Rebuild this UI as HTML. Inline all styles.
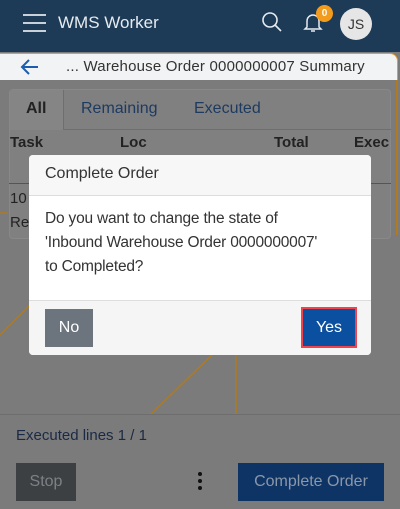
<!DOCTYPE html>
<html><head><meta charset="utf-8"><style>
*{box-sizing:border-box;margin:0;padding:0}
body{width:400px;height:509px;overflow:hidden;position:relative;background:#7b7b7b;font-family:"Liberation Sans",sans-serif}
.a{position:absolute}
</style></head><body>
<div class="a" style="left:0;top:0;width:400px;height:52px;background:#1d3a56"></div>
<div class="a" style="top:14px;left:23px;width:23px;height:2px;background:#c9d0d8"></div>
<div class="a" style="top:22px;left:23px;width:23px;height:2px;background:#c9d0d8"></div>
<div class="a" style="top:30px;left:23px;width:23px;height:2px;background:#c9d0d8"></div>
<div class="a" style="left:58px;top:13px;font-size:17px;color:#e6ebf0">WMS Worker</div>
<svg class="a" style="left:260px;top:10px" width="24" height="24" viewBox="0 0 24 24" fill="none" stroke="#e6ebf0" stroke-width="1.6"><circle cx="10" cy="10" r="7"/><path d="M15 15l6 6"/></svg>
<svg class="a" style="left:301px;top:10px" width="24" height="24" viewBox="0 0 24 24" fill="none" stroke="#e6ebf0" stroke-width="1.5"><path d="M6 17V11a6 6 0 0 1 12 0v6l2 2H4z"/><path d="M10 21h4"/></svg>
<div class="a" style="left:316px;top:5px;width:17px;height:17px;border-radius:50%;background:#f29b1d;color:#fff;font-size:10px;font-weight:bold;text-align:center;line-height:17px">0</div>
<div class="a" style="left:340px;top:8px;width:32px;height:32px;border-radius:50%;background:#e6e6e6;color:#333;font-size:14px;text-align:center;line-height:32px">JS</div>
<div class="a" style="left:0;top:53px;width:398px;height:60px;background:#f1f3f5;border-top:1.5px solid #f29b1d;border-right:1.5px solid #f29b1d;border-top-right-radius:8px"></div>
<svg class="a" style="left:19px;top:56px" width="22" height="22" viewBox="0 0 22 22" fill="none" stroke="#1c5db0" stroke-width="2"><path d="M19 11H3M10 4l-7 7 7 7"/></svg>
<div class="a" style="left:66px;top:58px;font-size:15px;color:#333;letter-spacing:0.2px">... Warehouse Order 0000000007 Summary</div>
<div class="a" style="left:0;top:80px;width:400px;height:429px;background:#7b7b7b"></div>
<div class="a" style="left:396px;top:80px;width:1.5px;height:155px;background:#b07a20"></div>
<div class="a" style="left:9px;top:89px;width:382px;height:150px;background:#808080;border:1px solid #888;border-radius:4px"></div>
<div class="a" style="left:10px;top:90px;width:54px;height:40px;background:#858585;border-right:1px solid #6e6e6e"></div>
<div class="a" style="left:64px;top:129px;width:327px;height:1px;background:#6e6e6e"></div>
<div class="a" style="left:26px;top:100px;font-size:16px;font-weight:bold;color:#222">All</div>
<div class="a" style="left:81px;top:100px;font-size:16px;color:#1e3a60">Remaining</div>
<div class="a" style="left:194px;top:100px;font-size:16px;color:#1e3a60">Executed</div>
<div class="a" style="left:10px;top:134px;font-size:15px;font-weight:bold;color:#222">Task</div>
<div class="a" style="left:120px;top:134px;font-size:15px;font-weight:bold;color:#222">Loc</div>
<div class="a" style="left:274px;top:134px;font-size:15px;font-weight:bold;color:#222">Total</div>
<div class="a" style="left:354px;top:134px;font-size:15px;font-weight:bold;color:#222">Exec</div>
<div class="a" style="left:9px;top:183px;width:382px;height:1px;background:#555"></div>
<div class="a" style="left:10px;top:187px;font-size:15px;color:#222;line-height:24px">10<br>Re</div>
<svg class="a" style="left:0;top:170px" width="400" height="250"><path d="M0 43H8M0 165L30 135M150 245L212 185" stroke="#b07a20" stroke-width="1.5"/><path d="M236 180V245" stroke="#b07a20" stroke-width="1.5"/></svg>
<div class="a" style="left:29px;top:155px;width:342px;height:200px;background:#fff;border-radius:4px;overflow:hidden">
<div style="height:41px;background:#f7f7f7;border-bottom:1px solid #ddd;padding:10px 16px;font-size:16px;color:#333">Complete Order</div>
<div style="height:104px;padding:11px 16px;font-size:15.5px;line-height:24px;color:#333;white-space:nowrap;letter-spacing:-0.2px">Do you want to change the state of<br>'Inbound Warehouse Order 0000000007'<br>to Completed?</div>
<div style="height:55px;background:#f5f5f5;border-top:1px solid #ddd;position:relative">
<div class="a" style="left:16px;top:8px;width:48px;height:38px;background:#6c757d;color:#fff;font-size:16px;text-align:center;line-height:38px">No</div>
<div class="a" style="left:272px;top:6px;width:56px;height:41px;border:2px solid #f0434d;background:#0b4fa0;color:#fff;font-size:16px;text-align:center;line-height:37px">Yes</div>
</div></div>
<div class="a" style="left:0;top:414px;width:400px;height:1px;background:#6e6e6e"></div>
<div class="a" style="left:16px;top:427px;font-size:15px;color:#1b2a44">Executed lines 1 / 1</div>
<div class="a" style="left:16px;top:463px;width:60px;height:38px;background:#3d4043;color:#7d8185;font-size:16px;text-align:center;line-height:38px">Stop</div>
<div class="a" style="left:198px;top:472px;width:4px;height:4px;border-radius:50%;background:#111;box-shadow:0 7px 0 #111,0 14px 0 #111"></div>
<div class="a" style="left:238px;top:463px;width:146px;height:38px;background:#0e3466;color:#8a97a8;font-size:16px;text-align:center;line-height:38px">Complete Order</div>
</body></html>
